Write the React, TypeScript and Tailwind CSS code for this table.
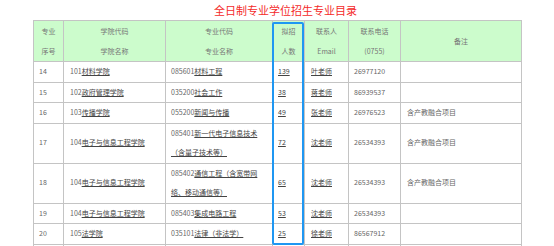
import React from "react";

type Row = {
  no: string;
  college: string;
  collegeName: React.ReactNode;
  major: string;
  majorName: React.ReactNode;
  count: string;
  contact: string;
  phone: string;
  note: string;
  h: string;
};

const rows: Row[] = [
  { no: "14", college: "101", collegeName: "材料学院", major: "085601", majorName: "材料工程", count: "139", contact: "叶老师", phone: "26977120", note: "", h: "h-[19px]" },
  { no: "15", college: "102", collegeName: "政府管理学院", major: "035200", majorName: "社会工作", count: "38", contact: "蒋老师", phone: "86939537", note: "", h: "h-[20px]" },
  { no: "16", college: "103", collegeName: "传播学院", major: "055200", majorName: "新闻与传播", count: "49", contact: "张老师", phone: "26976523", note: "含产教融合项目", h: "h-[20px]" },
  {
    no: "17",
    college: "104",
    collegeName: "电子与信息工程学院",
    major: "085401",
    majorName: (
      <>
        新一代电子信息技术
        <br />
        （含量子技术等）
      </>
    ),
    count: "72",
    contact: "沈老师",
    phone: "26534393",
    note: "含产教融合项目",
    h: "h-[38px]",
  },
  {
    no: "18",
    college: "104",
    collegeName: "电子与信息工程学院",
    major: "085402",
    majorName: (
      <>
        通信工程（含宽带网
        <br />
        络、移动通信等）
      </>
    ),
    count: "65",
    contact: "沈老师",
    phone: "26534393",
    note: "含产教融合项目",
    h: "h-[39px]",
  },
  { no: "19", college: "104", collegeName: "电子与信息工程学院", major: "085403", majorName: "集成电路工程", count: "53", contact: "沈老师", phone: "26534393", note: "", h: "h-[20px]" },
  { no: "20", college: "105", collegeName: "法学院", major: "035101", majorName: "法律（非法学）", count: "25", contact: "徐老师", phone: "86567912", note: "", h: "h-[19px]" },
];

const cell = "border border-[#c4c4c4] px-[5px] py-0 align-middle";
const head = "border border-[#c4c4c4] p-0 text-center align-middle leading-[20px] text-[#777] font-normal";
const link = "text-[#444] underline underline-offset-[1px]";

export default function App() {
  return (
    <div className="w-[554px] h-[246px] overflow-hidden bg-white font-['Noto_Sans_CJK_SC','Microsoft_YaHei',sans-serif]">
      <div className="pl-[17px] h-[20px] text-center text-[11px] leading-[20px] text-[#f42a2a]">
        全日制专业学位招生专业目录
      </div>
      <div className="relative mx-auto w-[488px]">
        <table className="w-[488px] table-fixed border-collapse text-[7px] text-[#666]">
          <colgroup>
            <col className="w-[30px]" />
            <col className="w-[102px]" />
            <col className="w-[107px]" />
            <col className="w-[32px]" />
            <col className="w-[44px]" />
            <col className="w-[52px]" />
            <col className="w-[121px]" />
          </colgroup>
          <thead>
            <tr className="h-[40px] bg-[#ccfccc]">
              <th className={head}>专业<br />序号</th>
              <th className={head}>学院代码<br />学院名称</th>
              <th className={head}>专业代码<br />专业名称</th>
              <th className={head}>拟招<br />人数</th>
              <th className={head}>联系人<br />Email</th>
              <th className={head}>联系电话<br />(0755)</th>
              <th className={head}>备注</th>
            </tr>
          </thead>
          <tbody>
            {rows.map((r) => (
              <tr key={r.no} className={r.h + " leading-[19.5px]"}>
                <td className={cell}>{r.no}</td>
                <td className={cell + " pl-[6px]"}>
                  {r.college}
                  <span className={link}>{r.collegeName}</span>
                </td>
                <td className={cell}>
                  {r.major}
                  <span className={link}>{r.majorName}</span>
                </td>
                <td className={cell}>
                  <span className={link}>{r.count}</span>
                </td>
                <td className={cell + " pl-[6px]"}>
                  <span className={link}>{r.contact}</span>
                </td>
                <td className={cell}>{r.phone}</td>
                <td className={cell + " pl-[6px]"}>{r.note}</td>
              </tr>
            ))}
            <tr className="h-[19px]">
              <td className={cell}></td>
              <td className={cell}></td>
              <td className={cell}></td>
              <td className={cell}></td>
              <td className={cell}></td>
              <td className={cell}></td>
              <td className={cell}></td>
            </tr>
          </tbody>
        </table>
        <div className="pointer-events-none absolute left-[239px] top-[2px] h-[223px] w-[32px] rounded-[2px] border-2 border-[#1f97f2]" />
      </div>
    </div>
  );
}
